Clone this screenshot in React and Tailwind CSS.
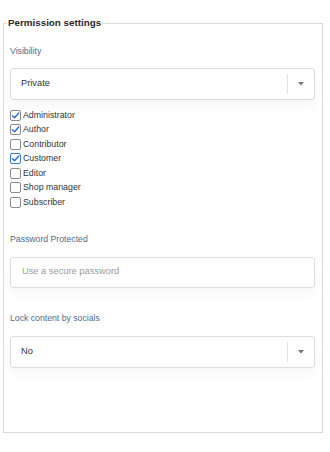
import React from 'react';

const roles = [
  { name: 'Administrator', checked: true },
  { name: 'Author', checked: true },
  { name: 'Contributor', checked: false },
  { name: 'Customer', checked: true, focused: true },
  { name: 'Editor', checked: false },
  { name: 'Shop manager', checked: false },
  { name: 'Subscriber', checked: false },
];

function Caret() {
  return (
    <svg width="6" height="4" viewBox="0 0 6 4" className="block">
      <path d="M0 0H6L3 3.5Z" fill="#777" />
    </svg>
  );
}

function SelectBox({ value }) {
  return (
    <div className="flex items-center w-[305px] h-[32px] border border-[#dcdcdc] rounded-[3px] bg-white shadow-[0_6px_12px_rgba(0,0,0,0.04)]">
      <span className="flex-1 pl-[10px] text-[9.3px] text-[#333]">{value}</span>
      <span className="w-px h-[20px] bg-[#e2e2e2]" />
      <span className="w-[26px] flex justify-center">
        <Caret />
      </span>
    </div>
  );
}

function Checkbox({ checked, focused }) {
  return (
    <span
      className={
        'flex items-center justify-center w-[11px] h-[11px] rounded-[2px] bg-white ' +
        (focused ? 'border-[1.5px] border-[#3d7cc9]' : 'border border-[#8a8a8a]')
      }
    >
      {checked && (
        <svg width="9" height="9" viewBox="0 0 10 10">
          <path d="M1.6 5.2L4 7.6L8.6 2.2" fill="none" stroke="#2f6fd0" strokeWidth="1.6" strokeLinecap="round" strokeLinejoin="round" />
        </svg>
      )}
    </span>
  );
}

export default function App() {
  return (
    <div className="w-[330px] h-[452px] bg-white pt-[17px] pl-[3px] font-['Liberation_Sans',Arial,sans-serif]">
      <fieldset className="w-[320px] h-[416px] border border-[#dadada] pl-[6px] pr-[7px]">
        <legend className="-ml-[3px] px-[1px] text-[9.8px] leading-[12px] font-bold text-[#2a2a2a]">
          Permission settings
        </legend>

        <div className="mt-[16px] text-[8.7px] leading-[12px] text-[#4d6d8c]">Visibility</div>
        <div className="mt-[11px]">
          <SelectBox value="Private" />
        </div>

        <div className="mt-[8px] flex flex-col">
          {roles.map((r) => (
            <label key={r.name} className="flex items-center h-[14.5px] gap-[2px] text-[8.8px] text-[#333]">
              <Checkbox checked={r.checked} focused={r.focused} />
              <span>{r.name}</span>
            </label>
          ))}
        </div>

        <div className="mt-[23px] text-[8.7px] leading-[12px] text-[#4d6d8c]">Password Protected</div>
        <div className="mt-[12px]">
          <div className="flex items-center w-[305px] h-[31px] border border-[#dcdcdc] rounded-[3px] bg-white shadow-[0_6px_12px_rgba(0,0,0,0.04)] pl-[11px] text-[9.3px] text-[#9a9a9a]">
            Use a secure password
          </div>
        </div>

        <div className="mt-[24px] text-[8.7px] leading-[12px] text-[#4d6d8c]">Lock content by socials</div>
        <div className="mt-[12px]">
          <SelectBox value="No" />
        </div>
      </fieldset>
    </div>
  );
}
